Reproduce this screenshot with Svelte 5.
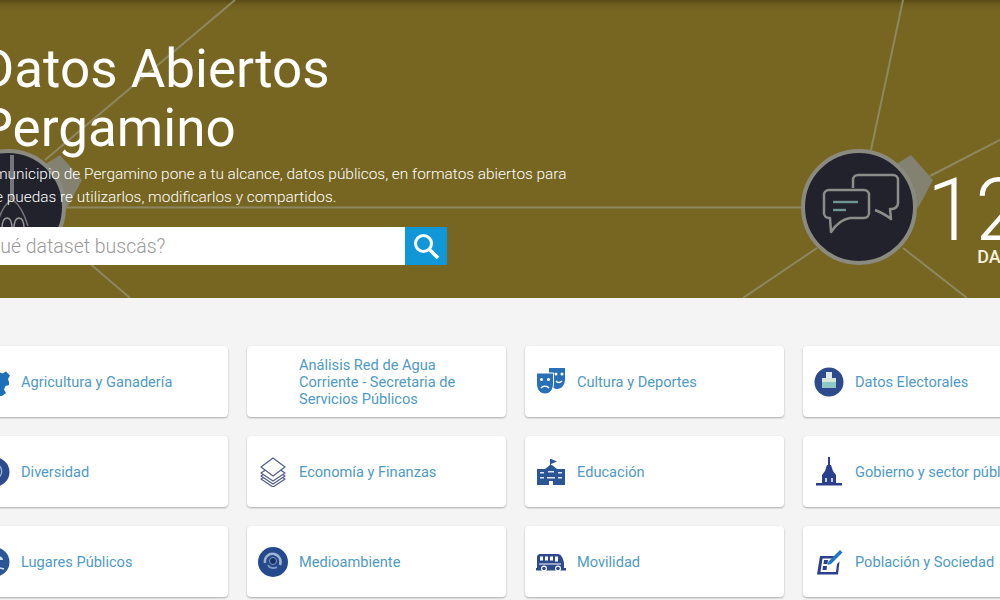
<script lang="ts">
  const categories = [
    { label: 'Agricultura y Ganadería', icon: 'gear' },
    { label: 'Análisis Red de Agua Corriente - Secretaria de Servicios Públicos', icon: '' },
    { label: 'Cultura y Deportes', icon: 'masks' },
    { label: 'Datos Electorales', icon: 'ballot' },
    { label: 'Diversidad', icon: 'head' },
    { label: 'Economía y Finanzas', icon: 'layers' },
    { label: 'Educación', icon: 'school' },
    { label: 'Gobierno y sector público', icon: 'tower' },
    { label: 'Lugares Públicos', icon: 'tree' },
    { label: 'Medioambiente', icon: 'swirl' },
    { label: 'Movilidad', icon: 'bus' },
    { label: 'Población y Sociedad', icon: 'form' }
  ];
</script>

{#snippet icon(name: string)}
  <svg class="cat-icon" width="30" height="30" viewBox="0 0 30 30" aria-hidden="true">
    {#if name === 'gear'}
      <path fill="#1f6fb8" d="M12 1h6l1 4 3.500 1.500 3.500-2 4 4-2 3.500L29 15v3l-3.500 1-1.500 3.500 2 3.500-4 3H8V2z" />
      <circle cx="15" cy="15" r="4" fill="#fff" />
    {:else if name === 'masks'}
      <path fill="#2a70b8" d="M13 1h16v11c0 6-3.500 10-8 10-4 0-8-4-8-10z" />
      <path fill="#2a70b8" stroke="#fff" stroke-width="1" d="M0.500 6h17v11c0 6-4 10-8.500 10S0.500 23 0.500 17z" />
      <circle cx="5.500" cy="12.500" r="1.500" fill="#fff" /><circle cx="12.500" cy="12.500" r="1.500" fill="#fff" />
      <circle cx="20" cy="7" r="1.500" fill="#fff" /><circle cx="26" cy="7" r="1.500" fill="#fff" />
      <path d="M5 21c2-2.500 6-2.500 8 0M20 14c1.500 2 4 2 6 0" fill="none" stroke="#fff" stroke-width="1.400" />
    {:else if name === 'ballot'}
      <circle cx="15" cy="15" r="14.500" fill="#2c4a8c" />
      <rect x="12" y="5" width="6" height="7" fill="#dfe8ef" />
      <rect x="8" y="11" width="14" height="4" fill="#d5e6d8" />
      <rect x="8" y="15" width="14" height="6" fill="#8fc7c4" />
    {:else if name === 'head'}
      <circle cx="15" cy="15" r="14.500" fill="#2c4a8c" />
      <path d="M10 25c-2-5-2-10 0-14 3-4 9-4 11 0 1.500 4 0 8-3 10v4" fill="none" stroke="#8fb4dc" stroke-width="1.500" />
      <path d="M13 8v16M17 8v13" stroke="#5f8fc8" stroke-width="1" />
    {:else if name === 'layers'}
      <g fill="#fff" stroke="#55608f" stroke-width="1.300" stroke-linejoin="round">
        <path d="M15 14 27 22 15 30 3 22z" />
        <path d="M15 11 27 19 15 27 3 19z" />
        <path d="M15 8 27 16 15 24 3 16z" />
        <path d="M15 1 27 10 15 19 3 10z" />
      </g>
    {:else if name === 'school'}
      <path fill="#2c5596" d="M15 2v5l6-2.500L15 2zM1 12h8l5-4h2l5 4h8v16H1z" />
      <path fill="#dce6f2" d="M12 14h6v1.500h-6zM4 15h4v1.500H4zM22 15h4v1.500h-4zM4 20h4v1.500H4zM22 20h4v1.500h-4zM11 20h8v1.500h-8z" />
      <rect x="13" y="24" width="4" height="4" fill="#fff" />
      <path d="M14.500 2v7" stroke="#2c5596" stroke-width="1" />
    {:else if name === 'tower'}
      <path fill="#2c3f8c" d="M14 0h2v8h1l2 6 3 4v8h6v2.500H2V26h6v-8l3-4 2-6h1z" />
      <path fill="#c6cfe6" d="M11 21h2v4h-2zM17 21h2v4h-2z" />
    {:else if name === 'tree'}
      <circle cx="15" cy="15" r="14.500" fill="#2c5596" />
      <path fill="#cfe0ef" d="M6 11c2-4 9-5 12-2 3 0 5 2 5 4H11l-2 2 7 1-3 2-7-2z" />
      <path d="M6 22c5-2 12-2 18 0" stroke="#cfe0ef" stroke-width="1.500" fill="none" />
    {:else if name === 'swirl'}
      <circle cx="15" cy="15" r="15" fill="#24498c" />
      <path d="M7 16c-1-6 4-10 9-9 5 1 8 6 6 11" fill="none" stroke="#9fb4d0" stroke-width="2.500" />
      <path d="M10 18c1 3 6 4 9 2" fill="none" stroke="#7f98bc" stroke-width="2" />
      <circle cx="15" cy="14" r="3.500" fill="#182f66" stroke="#7f98bc" stroke-width="1" />
    {:else if name === 'bus'}
      <path fill="#2c4a8c" d="M3 7h19c3 0 5 4 6 9v6H1V9z" />
      <path fill="#2c4a8c" d="M0 21h30v2.500H0z" />
      <path fill="#fff" d="M4 9.500h3v4H4zM9 9.500h3v4H9zM14 9.500h3v4h-3zM19 9.500h3v5h-3z" />
      <path fill="#fff" d="M3 16.500h22v1H3z" />
      <circle cx="8" cy="21.500" r="3" fill="#fff" /><circle cx="22" cy="21.500" r="3" fill="#fff" />
      <circle cx="8" cy="21.500" r="1.800" fill="#2c4a8c" /><circle cx="22" cy="21.500" r="1.800" fill="#2c4a8c" />
    {:else if name === 'form'}
      <path fill="#2c3f8c" d="M6 9h15l-2 2.500H8.500L6.500 25H22l1-8 2.500-2.500L24 27.500H3z" />
      <path fill="#2c3f8c" d="M10 13h4l-.5 4H9.500zM9 19h4l-.5 4h-4z" />
      <path fill="#1f78c4" d="M26 3l2.500 2.500L17 17l-3.500 1 1-3.500z" />
    {/if}
  </svg>
{/snippet}

<div class="page">
  <header class="hero">
    <svg class="net" width="1000" height="298" viewBox="0 0 1000 298" aria-hidden="true">
      <g stroke="#8e8860" stroke-width="2" fill="none">
        <path d="M235 0 45 160" />
        <path d="M60 207.500H805" />
        <path d="M88 262l42 36" />
        <path d="M903 0 871 150" />
        <path d="M1000 140 930 176" />
        <path d="M817 248 743 298" />
        <path d="M903 248 967 298" />
      </g>
    </svg>

    <div class="node left">
      <span class="tab"></span>
      <span class="disc">
        <svg width="108" height="108" viewBox="0 0 108 108" fill="none" aria-hidden="true">
          <path d="M58 2v45" stroke="#77767a" stroke-width="4" />
          <path d="M57 47c-8 6-12 16-14 26M59 47c8 6 12 16 15 26" stroke="#77767a" stroke-width="1.500" />
          <path d="M48 76c0-7 2-11 5-11s5 4 5 11M60 76c0-7 2-11 5-11s5 4 5 11" stroke="#9a9a98" stroke-width="1.500" />
        </svg>
      </span>
    </div>

    <div class="node right">
      <span class="tab"></span>
      <span class="disc">
        <svg width="108" height="108" viewBox="0 0 108 108" fill="none" aria-hidden="true">
          <path d="M48 35v-8a5 5 0 0 1 5-5h35a5 5 0 0 1 5 5v23a6 6 0 0 1-6 6h-2l1 10c-6-5-11-7-16-9" stroke="#8c8c88" stroke-width="2.500" stroke-linejoin="round" />
          <path d="M24 37h35a5 5 0 0 1 5 5v18a5 5 0 0 1-5 5H45c-7 1-13 5-19 14l-1-14h-1a5 5 0 0 1-5-5V42a5 5 0 0 1 5-5z" stroke="#8c8c88" stroke-width="2.500" stroke-linejoin="round" />
          <path d="M28 49h25" stroke="#6f9494" stroke-width="2.400" />
          <path d="M28 57h13" stroke="#6f9494" stroke-width="2.400" />
        </svg>
      </span>
    </div>

    <div class="counter">
      <strong>127</strong>
      <span>DATOS</span>
    </div>

    <div class="intro">
      <h1>Datos Abiertos Pergamino</h1>
      <p>El municipio de Pergamino pone a tu alcance, datos públicos, en formatos abiertos para que puedas re utilizarlos, modificarlos y compartidos.</p>
      <form class="search">
        <input type="text" placeholder="Qué dataset buscás?" />
        <button type="button" aria-label="Buscar">
          <svg width="28" height="28" viewBox="0 0 28 28" fill="none" stroke="#fff" aria-hidden="true">
            <circle cx="11.500" cy="11.500" r="8" stroke-width="3" />
            <path d="M17.500 17.500 26 26" stroke-width="3.600" />
          </svg>
        </button>
      </form>
    </div>
  </header>

  <main class="grid">
    {#each categories as cat}
      <a class="card" href="#top">
        <span class="icon-box">{@render icon(cat.icon)}</span>
        <span class="label">{cat.label}</span>
      </a>
    {/each}
  </main>
</div>

<style>
  :global(body) {
    margin: 0;
    background: #f4f4f4;
    overflow: hidden;
    font-family: Roboto, "Liberation Sans", sans-serif;
  }

  .page {
    width: 1000px;
    height: 600px;
    overflow: hidden;
  }

  .hero {
    position: relative;
    height: 298px;
    background: linear-gradient(#574a15 0, #6f5f20 5px, #776622 12px);
    overflow: hidden;
  }

  .net {
    position: absolute;
    top: 0;
    left: 0;
  }

  .node {
    position: absolute;
    top: 149px;
    width: 116px;
    height: 116px;
  }
  .node.left {
    left: -50px;
  }
  .node.right {
    left: 801px;
  }

  .tab {
    position: absolute;
    top: 0;
    left: 0;
    width: 140px;
    height: 70px;
    background: #83816f;
    clip-path: polygon(84px 22px, 110px 6px, 132px 31px, 117px 59px);
  }

  .disc {
    position: absolute;
    inset: 0;
    box-sizing: border-box;
    border-radius: 50%;
    border: 4px solid #8b8a7f;
    background: #22222c;
  }
  .disc svg {
    display: block;
  }

  .counter {
    position: absolute;
    top: 173px;
    left: 926px;
    width: 147px;
    display: flex;
    flex-direction: column;
    align-items: center;
    color: #fff;
  }
  .counter strong {
    font-size: 87px;
    font-weight: 300;
    line-height: 74px;
  }
  .counter span {
    margin-left: 12px;
    font-size: 18px;
    font-weight: 500;
    line-height: 20px;
    color: #f4f2da;
  }

  .intro {
    position: relative;
    margin-left: -22px;
    padding-top: 40px;
  }

  h1 {
    margin: 0 0 0 1.500px;
    width: 420px;
    font-size: 53px;
    font-weight: 400;
    line-height: 59px;
    color: #fff;
  }

  p {
    margin: 5px 0 0;
    width: 600px;
    font-size: 15.400px;
    font-weight: 300;
    line-height: 23px;
    color: #fff;
  }

  .search {
    display: flex;
    margin-top: 18px;
    width: 469px;
    height: 38px;
  }
  .search input {
    flex: 1;
    min-width: 0;
    border: 0;
    margin: 0;
    padding: 0 0 0 9px;
    background: #fff;
    font: 300 19.500px Roboto, sans-serif;
    outline: none;
  }
  .search input::placeholder {
    color: #9a9a9a;
    opacity: 1;
  }
  .search button {
    width: 42px;
    flex-shrink: 0;
    padding: 0;
    border: 0;
    background: #0f97d8;
    display: flex;
    align-items: center;
    justify-content: center;
  }

  .grid {
    display: grid;
    grid-template-columns: repeat(4, 259px);
    grid-auto-rows: 71px;
    gap: 19px;
    margin: 48px 0 0 -31px;
    width: 1093px;
  }

  .card {
    display: flex;
    align-items: center;
    gap: 11px;
    padding: 0 22px 0 11px;
    background: #fff;
    border-radius: 4px;
    box-shadow: 0 1px 2px rgba(0, 0, 0, 0.3);
    text-decoration: none;
  }

  .icon-box {
    flex: 0 0 30px;
    height: 30px;
  }
  .cat-icon {
    display: block;
  }

  .label {
    margin-top: 2px;
    font-size: 14.600px;
    line-height: 17px;
    color: #4f9ac6;
  }
</style>
